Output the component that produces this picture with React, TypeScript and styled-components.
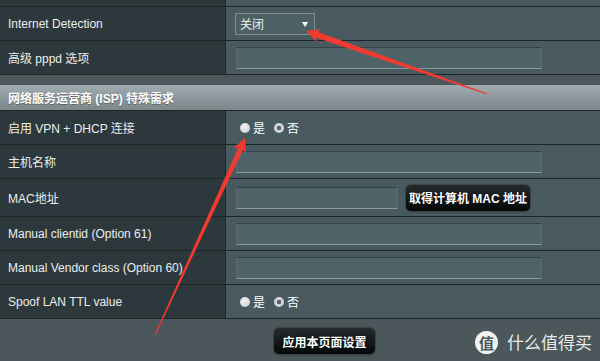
import React from "react";
import styled, { createGlobalStyle } from "styled-components";

const Global = createGlobalStyle`
  html, body { margin: 0; padding: 0; }
  body {
    width: 600px; height: 361px; overflow: hidden;
    background: #4b575b;
    font-family: "Liberation Sans", Arial, "Noto Sans CJK SC", sans-serif;
    font-size: 12px;
    color: #eef0f0;
  }
`;

const Page = styled.div`
  position: relative;
  width: 600px;
  height: 361px;
  display: flex;
  flex-direction: column;
  background: #4b575b;
  overflow: hidden;
`;

const Row = styled.div<{ $h: number }>`
  display: grid;
  grid-template-columns: 226px 1fr;
  height: ${(p) => p.$h}px;
  border-bottom: 1px solid #1f2629;
  box-sizing: content-box;
  flex-shrink: 0;
`;

const Label = styled.div`
  background: #2d383c;
  border-right: 1px solid #1f2629;
  display: flex;
  align-items: center;
  padding-left: 8px;
  color: #eceeee;
  white-space: nowrap;
`;

const Value = styled.div`
  background: #485a5f;
  display: flex;
  align-items: center;
  padding-left: 10px;
  gap: 8px;
`;

const Strip = styled.div`
  height: 10px;
  flex-shrink: 0;
  background: #4c575b;
`;

const Header = styled.div`
  height: 25px;
  flex-shrink: 0;
  background: linear-gradient(#a1abaf, #7b878b);
  border-bottom: 1px solid #1f2629;
  display: flex;
  align-items: center;
  padding-left: 8px;
  font-weight: bold;
  color: #ffffff;
  text-shadow: 0 1px 1px rgba(0, 0, 0, 0.35);
`;

const TextInput = styled.div<{ $w: number }>`
  width: ${(p) => p.$w}px;
  height: 20px;
  background: #4f6468;
  border-top: 1px solid #34424a;
  border-bottom: 1px solid #8a9a9e;
  border-left: 1px solid #5a6c70;
  border-right: 1px solid #5a6c70;
`;

const Select = styled.div`
  position: relative;
  width: 74px;
  height: 20px;
  margin-left: -1px;
  background: #4d6165;
  border: 1px solid #7f8f93;
  display: flex;
  align-items: center;
  padding-left: 4px;
  box-sizing: content-box;
  color: #f2f2f2;
  font-family: "Noto Sans CJK SC", sans-serif;
  font-size: 12px;
  &::after {
    content: "";
    position: absolute;
    right: 6px;
    top: 8px;
    border-left: 3px solid transparent;
    border-right: 3px solid transparent;
    border-top: 5px solid #ffffff;
  }
`;

const Radios = styled.div`
  display: flex;
  align-items: center;
  margin-left: 4px;
  gap: 9px;
`;

const RadioItem = styled.span`
  display: inline-flex;
  align-items: center;
  gap: 3px;
  font-family: "Noto Sans CJK SC", sans-serif;
  font-size: 12px;
  color: #ffffff;
`;

const Dot = styled.span<{ $on?: boolean }>`
  width: 10px;
  height: 10px;
  border-radius: 50%;
  box-sizing: border-box;
  background: ${(p) =>
    p.$on
      ? "radial-gradient(circle, #5a6266 0 2px, #d0d4d6 2.5px)"
      : "radial-gradient(circle at 40% 35%, #f2f2f2, #c8cccd)"};
`;

const DarkButton = styled.div<{ $w: number }>`
  width: ${(p) => p.$w}px;
  height: 26px;
  border-radius: 5px;
  background: linear-gradient(#252c2f, #050707);
  box-shadow: 0 0 0 1px #3a4548, 0 1px 2px rgba(0, 0, 0, 0.5);
  display: flex;
  align-items: center;
  justify-content: center;
  color: #ffffff;
  font-weight: bold;
  font-size: 12px;
  text-shadow: 0 0 1px #000;
  white-space: nowrap;
  flex-shrink: 0;
`;

const Footer = styled.div`
  flex: 1;
  display: flex;
  align-items: center;
  padding-left: 274px;
  padding-top: 2px;
  background: #4b575b;
`;

const Watermark = styled.div`
  position: absolute;
  left: 475px;
  top: 330px;
  width: 125px;
  height: 24px;
  display: flex;
  align-items: center;
  gap: 9px;
  white-space: nowrap;
  color: rgba(255, 255, 255, 0.9);
  font-family: "Noto Sans CJK SC", sans-serif;
  font-size: 17px;
  line-height: 24px;
`;

const Logo = styled.span`
  flex-shrink: 0;
  width: 23px;
  height: 23px;
  border-radius: 50%;
  background: rgba(255, 255, 255, 0.92);
  color: #4b575b;
  display: flex;
  align-items: center;
  justify-content: center;
  font-size: 15px;
  font-weight: bold;
  line-height: 1;
`;

const Overlay = styled.svg`
  position: absolute;
  left: 0;
  top: 0;
  pointer-events: none;
`;

const YesNo = () => (
  <Radios>
    <RadioItem>
      <Dot />是
    </RadioItem>
    <RadioItem>
      <Dot $on />否
    </RadioItem>
  </Radios>
);

export default function App() {
  return (
    <>
      <Global />
      <Page>
        <Row $h={6}>
          <Label />
          <Value />
        </Row>
        <Row $h={33}>
          <Label>Internet Detection</Label>
          <Value>
            <Select>关闭</Select>
          </Value>
        </Row>
        <Row $h={33}>
          <Label>高级 pppd 选项</Label>
          <Value>
            <TextInput $w={304} />
          </Value>
        </Row>
        <Strip />
        <Header>网络服务运营商 (ISP) 特殊需求</Header>
        <Row $h={33}>
          <Label>启用 VPN + DHCP 连接</Label>
          <Value>
            <YesNo />
          </Value>
        </Row>
        <Row $h={33}>
          <Label>主机名称</Label>
          <Value>
            <TextInput $w={304} />
          </Value>
        </Row>
        <Row $h={37}>
          <Label>MAC地址</Label>
          <Value>
            <TextInput $w={160} />
            <DarkButton $w={124}>取得计算机 MAC 地址</DarkButton>
          </Value>
        </Row>
        <Row $h={33}>
          <Label>Manual clientid (Option 61)</Label>
          <Value>
            <TextInput $w={304} />
          </Value>
        </Row>
        <Row $h={33}>
          <Label>Manual Vendor class (Option 60)</Label>
          <Value>
            <TextInput $w={304} />
          </Value>
        </Row>
        <Row $h={33}>
          <Label>Spoof LAN TTL value</Label>
          <Value>
            <YesNo />
          </Value>
        </Row>
        <Footer>
          <DarkButton $w={101}>应用本页面设置</DarkButton>
        </Footer>
        <Watermark>
          <Logo>值</Logo>
          <span>什么值得买</span>
        </Watermark>
        <Overlay width="600" height="361" viewBox="0 0 600 361">
          <polygon
            fill="#f23a30"
            points="306,31 316.9,42.2 315.4,37.4 487,94.6 487.3,93.6 317.4,31.8 321.5,29"
          />
          <polygon
            fill="#f23a30"
            points="245,138 246,154 243.1,149.4 155.5,335.2 154.5,334.8 238.5,147.4 233.2,148.2"
          />
        </Overlay>
      </Page>
    </>
  );
}
